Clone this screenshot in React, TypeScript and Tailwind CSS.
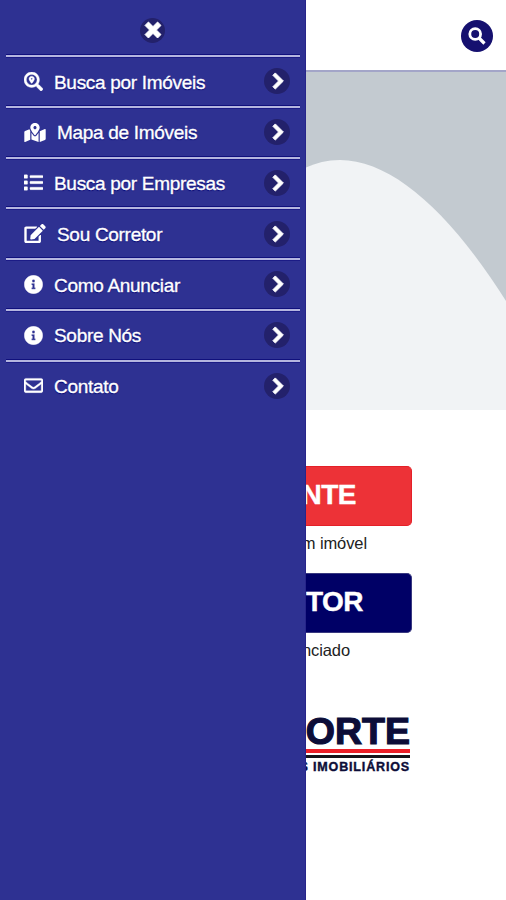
import type { IconType } from "react-icons";
import {
    FaEdit,
    FaInfoCircle,
    FaList,
    FaMapMarkedAlt,
    FaRegEnvelope,
    FaSearchLocation,
} from "react-icons/fa";

type MenuItem = { label: string; icon: IconType; wide?: boolean };

const MENU: MenuItem[] = [
    { label: "Busca por Imóveis", icon: FaSearchLocation },
    { label: "Mapa de Imóveis", icon: FaMapMarkedAlt, wide: true },
    { label: "Busca por Empresas", icon: FaList },
    { label: "Sou Corretor", icon: FaEdit, wide: true },
    { label: "Como Anunciar", icon: FaInfoCircle },
    { label: "Sobre Nós", icon: FaInfoCircle },
    { label: "Contato", icon: FaRegEnvelope },
];

function Chevron() {
    return (
        <span className="flex h-[26px] w-[26px] items-center justify-center rounded-full bg-[#23216b]">
            <svg viewBox="0 0 14 14" className="h-[16px] w-[16px] overflow-visible" fill="#fff" stroke="#fff" strokeWidth="0.8" strokeLinejoin="round" aria-hidden>
                <polygon points="3.4,2.05 8.35,7 3.4,11.95 5.52,14.07 12.6,7 5.52,-0.07" />
            </svg>
        </span>
    );
}

function Drawer() {
    return (
        <aside className="relative z-10 h-[900px] w-[306px] flex-none border-r border-[#27258a] bg-[#2e3192] px-1.5">
            <button
                aria-label="Fechar"
                className="flex h-[54px] w-full items-center justify-center pt-[6px]"
            >
                <span className="flex h-[25px] w-[25px] items-center justify-center rounded-full bg-[#23216b]">
                    <svg viewBox="0 0 14 14" className="h-[16px] w-[16px] overflow-visible" fill="#fff" stroke="#fff" strokeWidth="0.8" strokeLinejoin="round" aria-hidden>
                        <polygon points="14,3 11,0 7,4 3,0 0,3 4,7 0,11 3,14 7,10 11,14 14,11 10,7" />
                    </svg>
                </span>
            </button>
            <ul className="w-[294px]">
                {MENU.map(({ label, icon: Icon, wide }) => (
                    <li key={label} className="h-[50.75px] border-t border-[#10107c]">
                        <a className="flex h-full items-center border-t-2 border-[#b4b5df] pt-px pr-[10px] pl-[18px] text-white shadow-[inset_0_1px_0_#1b1b86]">
                            <Icon
                                stroke="#fff"
                                strokeWidth={wide ? 0 : 10}
                                className={wide ? "h-[19px] w-[22px] flex-none" : "h-[19px] w-[19px] flex-none"}
                            />
                            <span className="ml-[11px] flex-1 pt-[3px] text-[19px] tracking-[-0.3px] whitespace-nowrap [-webkit-text-stroke:0.35px_#fff] [text-shadow:0_1px_1px_#000070]">
                                {label}
                            </span>
                            <Chevron />
                        </a>
                    </li>
                ))}
            </ul>
        </aside>
    );
}

export default function App() {
    return (
        <div className="flex h-[900px] w-[506px] overflow-hidden bg-white font-['Liberation_Sans',Arial,sans-serif]">
            <Drawer />
            <main className="flex w-[200px] flex-none flex-col">
                <header className="flex h-[72px] items-center justify-end border-b-2 border-[#a3a5c8] pt-[2px] pr-[13px]">
                    <button aria-label="Buscar" className="flex h-8 w-8 items-center justify-center rounded-full bg-[#15106f]">
                        <svg viewBox="0 0 18 18" className="h-[18px] w-[18px]" fill="none" stroke="#fff" aria-hidden>
                            <circle cx="7.2" cy="7" r="5.4" strokeWidth="2.8" />
                            <path d="M11 11l5.500 5.500" strokeWidth="3.2" />
                        </svg>
                    </button>
                </header>

                <svg viewBox="0 0 200 338" className="h-[338px] w-[200px] flex-none" aria-hidden>
                    <rect width="200" height="338" fill="#c3cad0" />
                    <path d="M0 95.500C10 91 21 88 34 88C87 88 145 142 200 229V338H0Z" fill="#f1f3f5" />
                </svg>

                <section className="mt-14 flex flex-col text-[#222]">
                    <div className="flex h-[60px] w-[106px] items-center justify-end rounded-r-[5px] border border-l-0 border-[#e42028] bg-[#ed3237] pr-[55px] pb-[2px] text-[28px] font-bold tracking-[-0.5px] text-white [-webkit-text-stroke:0.4px_#fff]">
                        NTE
                    </div>
                    <p className="flex h-[47px] w-[61px] items-center justify-end pb-[12px] text-[16.5px] tracking-[-0.1px] whitespace-nowrap">
                        m imóvel
                    </p>
                    <div className="flex h-[60px] w-[106px] items-center justify-end rounded-r-[5px] border border-l-0 border-[#38387f] bg-[#000066] pr-[48px] pb-[2px] text-[28px] font-bold tracking-[-0.5px] text-white [-webkit-text-stroke:0.4px_#fff]">
                        TOR
                    </div>
                    <p className="flex h-[47px] w-[44px] items-center justify-end pb-[12px] text-[16.5px] tracking-[-0.1px] whitespace-nowrap">
                        nciado
                    </p>
                </section>

                <section className="mt-[33px] flex w-[104px] flex-col text-[#0c0d38]">
                    <div className="flex h-[36px] items-center justify-end pt-px text-[37.5px] leading-none font-bold whitespace-nowrap [-webkit-text-stroke:1.2px_#0c0d38]">
                        ORTE
                    </div>
                    <div className="h-[4px] bg-[#ec2029]" />
                    <div className="mt-[2px] h-[3px] bg-[#15151c]" />
                    <div className="mt-[2px] flex justify-end text-[12.5px] leading-[14px] font-bold tracking-[0.85px] whitespace-nowrap [-webkit-text-stroke:0.4px_#0c0d38]">
                        S IMOBILIÁRIOS
                    </div>
                </section>
            </main>
        </div>
    );
}
